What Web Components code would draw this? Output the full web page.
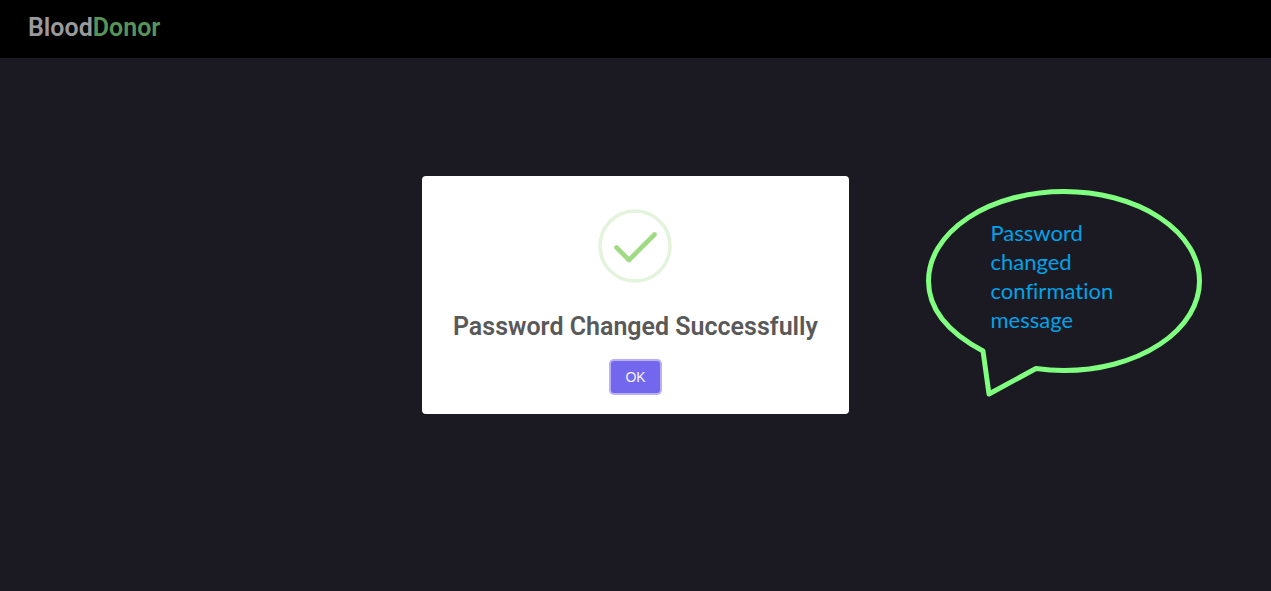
<!DOCTYPE html>
<html lang="en">
<head>
<meta charset="utf-8">
<meta name="viewport" content="width=device-width, initial-scale=1">
<title>BloodDonor</title>
<style>
  body { margin: 0; background: #1b1a22; font-family: Roboto, "Liberation Sans", sans-serif; }
</style>
</head>
<body>
<donor-app></donor-app>
<script>
function define(name, markup) {
  const template = document.createElement('template');
  template.innerHTML = markup;
  customElements.define(name, class extends HTMLElement {
    constructor() {
      super();
      this.attachShadow({ mode: 'open' }).append(template.content.cloneNode(true));
    }
  });
}

define('site-header', `
  <style>
    :host { display: block; background: #000; }
    header { padding: 13px 28px 15px; }
    a { font-size: 25px; line-height: 30px; font-weight: 600; color: #9a9a9c; text-decoration: none; display: inline-block; vertical-align: top; }
    ::slotted(*) { color: #589459; }
  </style>
  <header><a href="#">Blood<slot></slot></a></header>`);

define('success-icon', `
  <style>
    :host { display: block; width: 74px; height: 74px; }
    svg { display: block; }
  </style>
  <svg width="74" height="74" viewBox="0 0 74 74" fill="none" aria-hidden="true">
    <circle cx="37" cy="37" r="35" stroke="#e4f3dc" stroke-width="3.5"/>
    <path d="M18.5 38.5 31 51 56.5 25.5" stroke="#a1da85" stroke-width="4.6" stroke-linecap="round" stroke-linejoin="round"/>
  </svg>`);

define('confirm-button', `
  <style>
    :host { display: block; }
    button { display: block; margin: 0; border: 0; border-radius: 3px; padding: 8px 14px; background: #7367ee; color: #f4f2ff;
      font: 400 14px/16px "Liberation Sans", Arial, sans-serif; box-shadow: 0 0 0 2px #b7b0f6; cursor: pointer; }
  </style>
  <button type="button"><slot></slot></button>`);

define('message-dialog', `
  <style>
    :host { display: block; }
    section { display: flex; flex-direction: column; align-items: center; background: #fff; border-radius: 4px; padding: 33px 31px 21px; }
    h2 { margin: 28px 0 18px; font-size: 25px; line-height: 32px; font-weight: 600; color: #595959; text-align: center; }
  </style>
  <section role="dialog" aria-labelledby="title">
    <success-icon></success-icon>
    <h2 id="title"><slot></slot></h2>
    <confirm-button>OK</confirm-button>
  </section>`);

define('speech-bubble', `
  <style>
    :host { display: block; position: relative; width: 276px; height: 208px; }
    svg { position: absolute; inset: 0; }
    p { position: relative; margin: 0; padding: 29px 76px 0 65px; font: 400 22px/29px Lato, Carlito, sans-serif; font-variant-ligatures: none; color: #00a2e8; }
  </style>
  <svg width="276" height="208" viewBox="0 0 276 208" fill="none" aria-hidden="true">
    <path d="M57 162 63 205 110 179.5Q124 181.5 138 181.5A135.5 89.5 0 0 0 273.5 92 135.5 89.5 0 0 0 138 2.5 135.5 89.5 0 0 0 2.5 92Q2.5 133 57 162Z" stroke="#80ff80" stroke-width="5" stroke-linejoin="round"/>
  </svg>
  <p><slot></slot></p>`);

define('donor-app', `
  <style>
    :host { display: block; min-height: 100vh; }
    main { position: absolute; inset: 0; display: grid; place-items: center; padding-bottom: 1px; pointer-events: none; }
    message-dialog { pointer-events: auto; }
    speech-bubble { position: absolute; left: calc(50% + 290px); top: calc(50% - 107px); }
  </style>
  <site-header><span>Donor</span></site-header>
  <main>
    <message-dialog>Password Changed Successfully</message-dialog>
    <speech-bubble>Password changed confirmation message</speech-bubble>
  </main>`);
</script>
</body>
</html>
